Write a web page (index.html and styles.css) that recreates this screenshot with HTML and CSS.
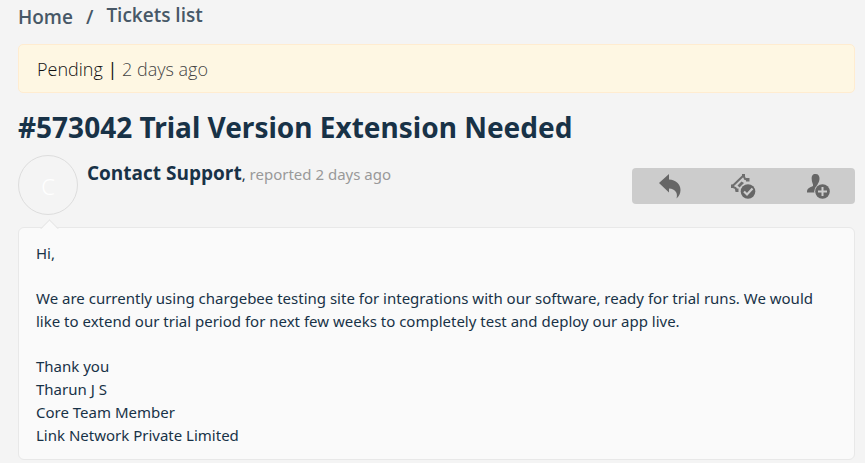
FILE: index.html
```html
<!DOCTYPE html>
<html lang="en">

<head>
    <meta charset="UTF-8">
    <meta name="viewport" content="width=device-width, initial-scale=1.0">
    <title>#573042 Trial Version Extension Needed</title>
    <link rel="stylesheet" href="styles.css">
</head>

<body>
    <nav class="breadcrumb">
        <a class="home" href="#">Home</a>
        <span class="separator">/</span>
        <a class="current" href="#">Tickets list</a>
    </nav>

    <main>
        <div class="status">Pending <span class="bar">|</span> <span class="status-time">2 days ago</span></div>

        <h1>#573042 Trial Version Extension Needed</h1>

        <div class="ticket-header">
            <div class="avatar">C</div>
            <p class="reporter"><strong>Contact Support</strong>, <span class="reported">reported 2 days ago</span></p>
            <div class="toolbar">
                <button type="button" aria-label="Reply">
                    <svg width="24" height="26" viewBox="0 0 24 26">
                        <path d="M2 10 12 1v5.500C19 7 23.500 11 23.500 17c0 3.500-1.500 6.500-4 8.500 1.500-5.500-1-9.500-7.500-10V19.500z" fill="#666"/>
                    </svg>
                </button>
                <button type="button" aria-label="Close ticket">
                    <svg width="26" height="26" viewBox="0 0 26 26">
                        <path d="M2 13.500 13.500 2.500M13.500 2.500l1.500 3.500 3.500 1M2 13.500l3.500 1.500 1.500 3.500" fill="none" stroke="#6e6e6e" stroke-width="2"/>
                        <path d="M12 1h3v3h-3zM16 5h3.500v3.500H16zM1 11.500h3v3.500H1zM5.500 15.500h3v3.500h-3z" fill="#6e6e6e"/>
                        <path d="M7.500 12.500l4-4 2.500 1.500-4.500 4.500z" fill="#6e6e6e"/>
                        <circle cx="18" cy="18.500" r="8.300" fill="#ccc"/>
                        <circle cx="18" cy="18.500" r="7.300" fill="#666"/>
                        <path d="M14 18.500l3 3 5.500-6" fill="none" stroke="#ccc" stroke-width="2.200"/>
                    </svg>
                </button>
                <button type="button" aria-label="Add contact">
                    <svg width="26" height="26" viewBox="0 0 26 26">
                        <path d="M10.500 1c3 0 4.200 2 4 5-.2 2.500-1.200 4-2 5.500v3l3 1.500v3.500H2c0-4 1.500-4.500 6-6.500v-1.500C7.200 9.500 6.800 8 6.700 6 6.500 3 7.500 1 10.500 1z" fill="#666"/>
                        <circle cx="17.500" cy="18.500" r="8.300" fill="#ccc"/>
                        <circle cx="17.500" cy="18.500" r="7.300" fill="#666"/>
                        <path d="M17.500 14v9M13 18.500h9" stroke="#ccc" stroke-width="2"/>
                    </svg>
                </button>
            </div>
        </div>

        <article class="message">
            <p>Hi,</p>
            <p>We are currently using chargebee testing site for integrations with our software, ready for trial runs. We would like to extend our trial period for next few weeks to completely test and deploy our app live.</p>
            <p>Thank you<br>Tharun J S<br>Core Team Member<br>Link Network Private Limited</p>
        </article>
    </main>
</body>

</html>
```

FILE: styles.css
```css
body {
    margin: 0;
    padding: 4px 10px 3px 18px;
    background-color: #f4f4f4;
    color: #183247;
    font-family: "Segoe UI", "Noto Sans", sans-serif;
    font-size: 15px;
    line-height: 23px;
}

.breadcrumb,
.status,
.reporter strong {
    font-family: "Segoe UI", "Open Sans", sans-serif;
}

.breadcrumb {
    display: flex;
    align-items: flex-start;
    gap: 13px;
    margin-bottom: 14px;
    color: #475867;
    font-size: 19px;
    font-weight: 600;
    line-height: 26px;
}

.breadcrumb a {
    color: #475867;
    text-decoration: none;
}

.breadcrumb .current {
    line-height: 23px;
}

.status {
    padding: 12px 18px 11px;
    border: 1px solid #ffecd0;
    border-radius: 5px;
    background-color: #fef7e3;
    color: #111;
    font-size: 18px;
    font-weight: 300;
    line-height: 24px;
}

.status .bar {
    font-weight: 400;
}

.status-time {
    color: #444;
}

h1 {
    margin: 14px 0 8px;
    font-size: 28px;
    font-weight: 700;
    line-height: 40px;
}

.ticket-header {
    display: flex;
    align-items: flex-start;
    gap: 9px;
    margin-bottom: 12px;
}

.avatar {
    box-sizing: border-box;
    width: 60px;
    height: 60px;
    border: 1px solid #ddd;
    border-radius: 50%;
    color: #fff;
    font-size: 22px;
    font-weight: 300;
    line-height: 60px;
    text-align: center;
}

.reporter {
    flex: 1;
    margin: 7px 0 0;
}

.reporter strong {
    font-size: 19px;
}

.reported {
    color: #999;
}

.toolbar {
    display: flex;
    width: 223px;
    height: 36px;
    margin-top: 13px;
    border-radius: 4px;
    background-color: #ccc;
}

.toolbar button {
    display: flex;
    flex: 1;
    align-items: center;
    justify-content: center;
    padding: 0;
    border: none;
    background: none;
    cursor: pointer;
}

.message {
    position: relative;
    padding: 14px 17px 12px;
    border: 1px solid #e8e8e8;
    border-radius: 6px;
    background-color: #fafafa;
}

/* pointer towards the avatar */
.message::before {
    content: "";
    position: absolute;
    top: -6px;
    left: 24px;
    width: 12px;
    height: 12px;
    border-top: 1px solid #e8e8e8;
    border-left: 1px solid #e8e8e8;
    background: linear-gradient(135deg, #fafafa 55%, transparent 55%);
    transform: rotate(45deg);
}

.message p {
    margin: 0 0 22px;
}

.message p:last-child {
    margin-bottom: 0;
}
```
